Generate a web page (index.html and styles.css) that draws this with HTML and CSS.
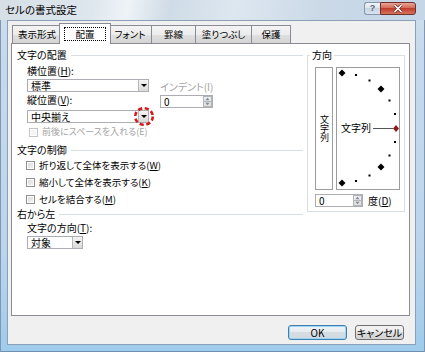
FILE: index.html
```html
<!DOCTYPE html>
<html lang="ja">
<head>
    <meta charset="UTF-8">
    <meta name="viewport" content="width=device-width, initial-scale=1.0">
    <title>セルの書式設定</title>
    <link rel="stylesheet" href="styles.css">
</head>
<body>
    <div class="window">
        <div class="titlebar">
            <span class="title">セルの書式設定</span>
            <div class="caption">
                <span class="help">?</span>
                <span class="close">
                    <svg width="12" height="9" viewBox="0 0 12 9"><path d="M2.5 1 L9.5 8 M9.5 1 L2.5 8" stroke="#6b2a22" stroke-width="3"/><path d="M2.5 1 L9.5 8 M9.5 1 L2.5 8" stroke="#fff" stroke-width="1.6"/></svg>
                </span>
            </div>
        </div>
        <div class="client">
            <div class="tabs">
                <div class="tab t1">表示形式</div>
                <div class="tab t2 active"><span class="focus">配置</span></div>
                <div class="tab t3">フォント</div>
                <div class="tab t4">罫線</div>
                <div class="tab t5">塗りつぶし</div>
                <div class="tab t6">保護</div>
            </div>
            <div class="panel">
                <div class="left">
                    <div class="section">文字の配置</div>
                    <div class="align-block">
                        <div class="align-col">
                            <div class="label">横位置(<u>H</u>):</div>
                            <div class="combo combo-h"><span class="value">標準</span><span class="drop"></span></div>
                            <div class="label label-v">縦位置(<u>V</u>):</div>
                            <div class="combo combo-v">
                                <span class="value">中央揃え</span><span class="drop"></span>
                                <svg class="mark" width="22" height="21" viewBox="0 0 22 21"><ellipse cx="11" cy="10.5" rx="8.8" ry="8.3" fill="none" stroke="#d41a1a" stroke-width="2.6" stroke-dasharray="4.2 2.6"/></svg>
                            </div>
                        </div>
                        <div class="indent-col">
                            <div class="label disabled">インデント(I)</div>
                            <div class="spin indent-spin">
                                <span class="value">0</span>
                                <svg class="spin-btn" width="9" height="11" viewBox="0 0 9 11"><rect x="0.5" y="0.5" width="8" height="5" fill="#ececec" stroke="#b5b5b5"/><rect x="0.5" y="5.5" width="8" height="5" fill="#e2e2e2" stroke="#b5b5b5"/><path d="M4.5 1.8 L6.6 4.2 L2.4 4.2Z" fill="#7d8aa3"/><path d="M2.4 6.8 L6.6 6.8 L4.5 9.2Z" fill="#7d8aa3"/></svg>
                            </div>
                        </div>
                    </div>
                    <div class="check disabled space-check"><span class="box"></span>前後にスペースを入れる(E)</div>
                    <div class="section section-ctrl">文字の制御</div>
                    <div class="check first"><span class="box"></span>折り返して全体を表示する(<u>W</u>)</div>
                    <div class="check"><span class="box"></span>縮小して全体を表示する(<u>K</u>)</div>
                    <div class="check"><span class="box"></span>セルを結合する(<u>M</u>)</div>
                    <div class="section section-rtl">右から左</div>
                    <div class="label label-dir">文字の方向(<u>T</u>):</div>
                    <div class="combo combo-dir"><span class="value">対象</span><span class="drop"></span></div>
                </div>
                <fieldset class="orient">
                    <legend>方向</legend>
                    <div class="orient-body">
                        <div class="orient-boxes">
                            <div class="vbox"><span>文字列</span></div>
                            <div class="dial">
                                <svg width="62" height="121" viewBox="0 0 62 121">
                                    <g fill="#000">
                                        <polygon points="5,1.5 8.5,5 5,8.5 1.5,5"/>
                                        <rect x="18" y="6" width="2" height="2"/>
                                        <rect x="31.5" y="11.5" width="2" height="2"/>
                                        <polygon points="44,17.5 47.5,21 44,24.5 40.5,21"/>
                                        <rect x="51.5" y="31.5" width="2" height="2"/>
                                        <rect x="57" y="45" width="2" height="2"/>
                                        <rect x="57" y="73" width="2" height="2"/>
                                        <rect x="51.5" y="86.5" width="2" height="2"/>
                                        <polygon points="44,95.5 47.5,99 44,102.5 40.5,99"/>
                                        <rect x="31.5" y="106.5" width="2" height="2"/>
                                        <rect x="18" y="112" width="2" height="2"/>
                                        <polygon points="5,111.5 8.5,115 5,118.5 1.5,115"/>
                                    </g>
                                    <line x1="36" y1="60.5" x2="56" y2="60.5" stroke="#555" stroke-width="1"/>
                                    <polygon points="59,57 62,60.5 59,64 56,60.5" fill="#8b1c1c"/>
                                    <text x="4" y="64" class="dial-text">文字列</text>
                                </svg>
                            </div>
                        </div>
                        <div class="degree">
                            <div class="spin degree-spin">
                                <span class="value">0</span>
                                <svg class="spin-btn" width="9" height="11" viewBox="0 0 9 11"><rect x="0.5" y="0.5" width="8" height="5" fill="#ececec" stroke="#b5b5b5"/><rect x="0.5" y="5.5" width="8" height="5" fill="#e2e2e2" stroke="#b5b5b5"/><path d="M4.5 1.8 L6.6 4.2 L2.4 4.2Z" fill="#7d8aa3"/><path d="M2.4 6.8 L6.6 6.8 L4.5 9.2Z" fill="#7d8aa3"/></svg>
                            </div>
                            <span>度(<u>D</u>)</span>
                        </div>
                    </div>
                </fieldset>
            </div>
            <div class="buttons">
                <button class="btn ok">OK</button>
                <button class="btn cancel">キャンセル</button>
            </div>
        </div>
    </div>
</body>
</html>
```

FILE: styles.css
```css
* {
    box-sizing: border-box;
}
body {
    margin: 0;
    font-family: "Noto Sans CJK JP", "Liberation Sans", sans-serif;
    font-size: 10px;
    font-feature-settings: "palt";
    color: #000;
    background: #fff;
}
u {
    text-decoration-thickness: 1px;
    text-underline-offset: 1px;
}
.window {
    width: 425px;
    height: 352px;
    display: flex;
    flex-direction: column;
    padding: 0 9px 7px 7px;
    background: linear-gradient(to bottom, #d3e0ec 0, #c8daec 40px, #bcd5ec 70%, #9fcbec 100%);
    box-shadow: inset 1px 0 0 #7f97b1, inset -1px 0 0 #7f97b1, inset 0 -1px 0 #6f8fae;
    overflow: hidden;
}
.titlebar {
    height: 20px;
    display: flex;
    justify-content: space-between;
    margin: 0 -9px 0 -7px;
    padding: 0 9px 0 5px;
    background: linear-gradient(100deg, #d6dee6 0%, #dfe7ee 22%, #eef3f7 30%, #cfdbe6 40%, #dde7f0 55%, #cbd9e7 75%, #c4d6e8 100%);
}
.title {
    padding-top: 3px;
    line-height: 14px;
    font-size: 10.5px;
}
.caption {
    display: flex;
    margin-top: 2px;
    height: 13px;
}
.help {
    width: 16px;
    height: 13px;
    border: 1px solid #8597ad;
    border-right: none;
    border-radius: 3px 0 0 3px;
    background: linear-gradient(#f0f4f8, #dbe4ec 50%, #c9d5e1 50%, #d9e3ed);
    color: #52657d;
    font: bold 9px/11px "Liberation Sans", sans-serif;
    text-align: center;
}
.close {
    width: 36px;
    height: 13px;
    border: 1px solid #70302a;
    border-radius: 0 3px 3px 0;
    background: linear-gradient(#eaa596, #d36a56 45%, #c13d2c 50%, #d8735d 100%);
    display: flex;
    align-items: center;
    justify-content: center;
}
.client {
    flex: 1;
    background: #f0f0f0;
    border: 1px solid #8aa0b8;
    padding: 2px 0 0 3px;
    display: flex;
    flex-direction: column;
}
.tabs {
    height: 20px;
    display: flex;
    align-items: flex-end;
    padding-left: 1px;
    position: relative;
    z-index: 1;
}
.tab {
    height: 18px;
    margin-left: -1px;
    border: 1px solid #898c95;
    border-bottom: none;
    background: linear-gradient(#f4f4f4, #ececec 50%, #e0e0e0 50%, #d4d4d4);
    font-size: 9.5px;
    line-height: 16px;
    text-align: center;
}
.t1 { width: 50px; margin-left: 0; }
.t3 { width: 44px; }
.t4 { width: 45px; }
.t5 { width: 57px; }
.t6 { width: 40px; }
.tab.active {
    width: 52px;
    height: 21px;
    margin: 0 -2px -1px -3px;
    background: #fff;
    position: relative;
    z-index: 2;
    padding: 3px 4px 0;
}
.focus {
    display: block;
    height: 14px;
    line-height: 12px;
    border: 1px dotted #000;
}
.panel {
    width: 399px;
    height: 273px;
    border: 1px solid #898c95;
    background: #fff;
    display: flex;
    padding: 5px 0 0 5px;
}
.left {
    width: 286px;
}
.section {
    height: 12px;
    line-height: 12px;
    display: flex;
    align-items: center;
}
.section::after {
    content: "";
    flex: 1;
    margin-left: 4px;
    border-top: 1px solid #d5dfe5;
}
.section-ctrl { margin-top: 6px; }
.section-rtl { margin-top: 3px; }
.label {
    height: 12px;
    line-height: 12px;
    white-space: nowrap;
}
.disabled {
    color: #a3a3a3;
}
.align-block {
    display: flex;
    margin: 4px 0 0 10px;
}
.align-col {
    width: 122px;
}
.label-v { margin-top: 2px; }
.combo {
    height: 13px;
    border: 1px solid #abadb3;
    background: #fff;
    display: flex;
    justify-content: space-between;
}
.combo .value {
    padding-left: 3px;
    line-height: 11px;
}
.combo-h { margin-top: 2px; }
.drop {
    width: 10px;
    height: 11px;
    border-left: 1px solid #b8b8b8;
    background: linear-gradient(#f4f4f4, #d9d9d9);
    display: flex;
    align-items: center;
    justify-content: center;
}
.drop::after {
    content: "";
    border-left: 3px solid transparent;
    border-right: 3px solid transparent;
    border-top: 3px solid #000;
}
.combo-v {
    margin-top: 4px;
    position: relative;
}
.mark {
    position: absolute;
    right: -7px;
    top: -5px;
}
.indent-col {
    margin-left: 11px;
    padding-top: 16px;
}
.spin {
    height: 13px;
    border: 1px solid #abadb3;
    background: #fff;
    display: flex;
    justify-content: space-between;
}
.spin .value {
    padding-left: 3px;
    line-height: 11px;
}
.indent-spin {
    width: 53px;
    margin-top: 2px;
}
.check {
    height: 12px;
    line-height: 12px;
    display: flex;
    align-items: center;
    margin: 5px 0 0 9px;
    font-size: 9.5px;
    white-space: nowrap;
}
.check.first { margin-top: 3px; }
.space-check {
    margin: 3px 0 0 12px;
    font-size: 9px;
}
.box {
    width: 9px;
    height: 9px;
    margin-right: 4px;
    border: 1px solid #8e8f8f;
    background: linear-gradient(135deg, #d6d6d6, #f7f7f7);
    box-shadow: inset 0 0 0 1px #fff;
}
.disabled .box {
    border-color: #c4c4c4;
    background: #f4f4f4;
}
.label-dir { margin: 2px 0 0 10px; }
.combo-dir {
    width: 56px;
    margin: 2px 0 0 10px;
}
.orient {
    width: 98px;
    height: 163px;
    margin: 0 0 0 4px;
    padding: 0;
    min-width: 0;
    border: 1px solid #d5dfe5;
}
.orient legend {
    padding: 0 2px;
    margin-left: 2px;
    line-height: 12px;
}
.orient-body {
    margin: 6px 0 0 7px;
}
.orient-boxes {
    display: flex;
    gap: 3px;
}
.vbox {
    width: 18px;
    height: 123px;
    border: 1px solid #9c9c9c;
    display: flex;
    align-items: center;
    justify-content: center;
}
.vbox span {
    writing-mode: vertical-rl;
    text-orientation: upright;
    font-size: 9px;
    line-height: 10px;
}
.dial {
    width: 64px;
    height: 123px;
    border: 1px solid #9c9c9c;
}
.dial svg {
    display: block;
}
.dial-text {
    font-family: "Noto Sans CJK JP", sans-serif;
    font-size: 10px;
    fill: #000;
}
.degree {
    display: flex;
    align-items: center;
    gap: 5px;
    margin-top: 3px;
}
.degree-spin {
    width: 48px;
}
.buttons {
    display: flex;
    justify-content: flex-end;
    gap: 8px;
    margin-top: 9px;
    padding-right: 11px;
}
.btn {
    height: 15px;
    padding: 0;
    font: 10px/13px "Noto Sans CJK JP", sans-serif;
    font-feature-settings: "palt";
    color: #000;
    border: 1px solid #707070;
    border-radius: 3px;
    background: linear-gradient(#f3f3f3, #ececec 50%, #dedede 50%, #d2d2d2);
}
.btn.ok {
    width: 59px;
    border-color: #3c7fb1;
    background: linear-gradient(#f0f5f8, #e4eaee 50%, #d6dee4 50%, #d0d9e0);
    box-shadow: inset 0 0 0 1px #9fd5f2;
}
.btn.cancel {
    width: 49px;
}
```
